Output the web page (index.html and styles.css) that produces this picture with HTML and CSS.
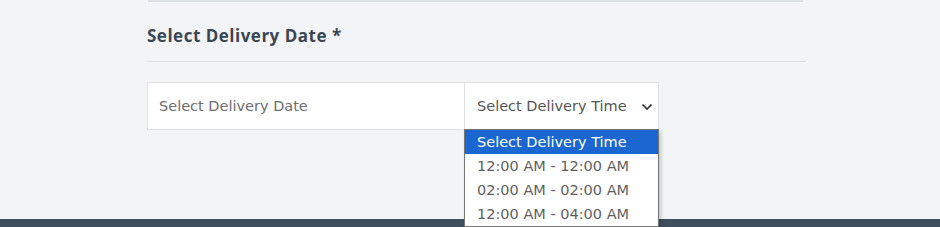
FILE: index.html
```html
<!DOCTYPE html>
<html lang="en">
<head>
    <meta charset="UTF-8">
    <title>Delivery Date</title>
    <link rel="stylesheet" href="styles.css">
</head>
<body>
    <div class="section">
        <div class="top-rule"></div>

        <h3 class="section-title">Select Delivery Date *</h3>

        <div class="delivery-row">
            <div class="date-input">Select Delivery Date</div>
            <div class="time-select">
                <span>Select Delivery Time</span>
                <svg class="chevron" width="12" height="8" viewBox="0 0 12 8">
                    <path d="M1.5 1.5 L6 6 L10.5 1.5" fill="none" stroke="#333" stroke-width="1.6"/>
                </svg>

                <!-- open option list -->
                <ul class="time-options">
                    <li class="active">Select Delivery Time</li>
                    <li>12:00 AM - 12:00 AM</li>
                    <li>02:00 AM - 02:00 AM</li>
                    <li>12:00 AM - 04:00 AM</li>
                </ul>
            </div>
        </div>
    </div>

    <footer class="footer"></footer>
</body>
</html>
```

FILE: styles.css
```css
body {
    margin: 0;
    background-color: #f3f4f6;
    font-family: 'DejaVu Sans', sans-serif;
    height: 227px;
    overflow: hidden;
    position: relative;
}

.section {
    width: 659px;
    margin-left: 147px;
}

.top-rule {
    height: 2px;
    background-color: #dcdfe3;
    margin-left: 1px;
    margin-right: 3px;
}

.section-title {
    margin: 0;
    padding: 22px 0 14px;
    font-family: 'Open Sans', sans-serif;
    font-size: 17px;
    font-weight: 700;
    color: #3b4655;
    border-bottom: 1px solid #dcdfe3;
    letter-spacing: 0.5px;
}

.delivery-row {
    display: flex;
    margin-top: 20px;
}

.date-input,
.time-select {
    height: 46px;
    border: 1px solid #dfe1e4;
    background-color: #fff;
    display: flex;
    align-items: center;
    font-size: 14.5px;
    color: #6d6d6d;
    box-sizing: content-box;
}

.date-input {
    width: 305px;
    padding-left: 11px;
    border-right: none;
}

.time-select {
    width: 181px;
    padding-left: 12px;
    color: #555;
    position: relative;
}

.chevron {
    position: absolute;
    right: 5px;
    top: 20px;
}

.time-options {
    position: absolute;
    left: -1px;
    top: 46px;
    width: 193px;
    margin: 0;
    padding: 0;
    list-style: none;
    background-color: #fff;
    border: 1px solid #767676;
    box-shadow: 2px 2px 4px rgba(0, 0, 0, 0.2);
    z-index: 2;
}

.time-options li {
    height: 24px;
    line-height: 24px;
    padding-left: 12px;
    font-size: 14.5px;
    color: #5f5f5f;
}

.time-options li.active {
    background-color: #1a67d2;
    color: #fff;
}

.footer {
    position: absolute;
    left: 0;
    right: 0;
    top: 219px;
    height: 8px;
    background-color: #3f4f5f;
}
```
